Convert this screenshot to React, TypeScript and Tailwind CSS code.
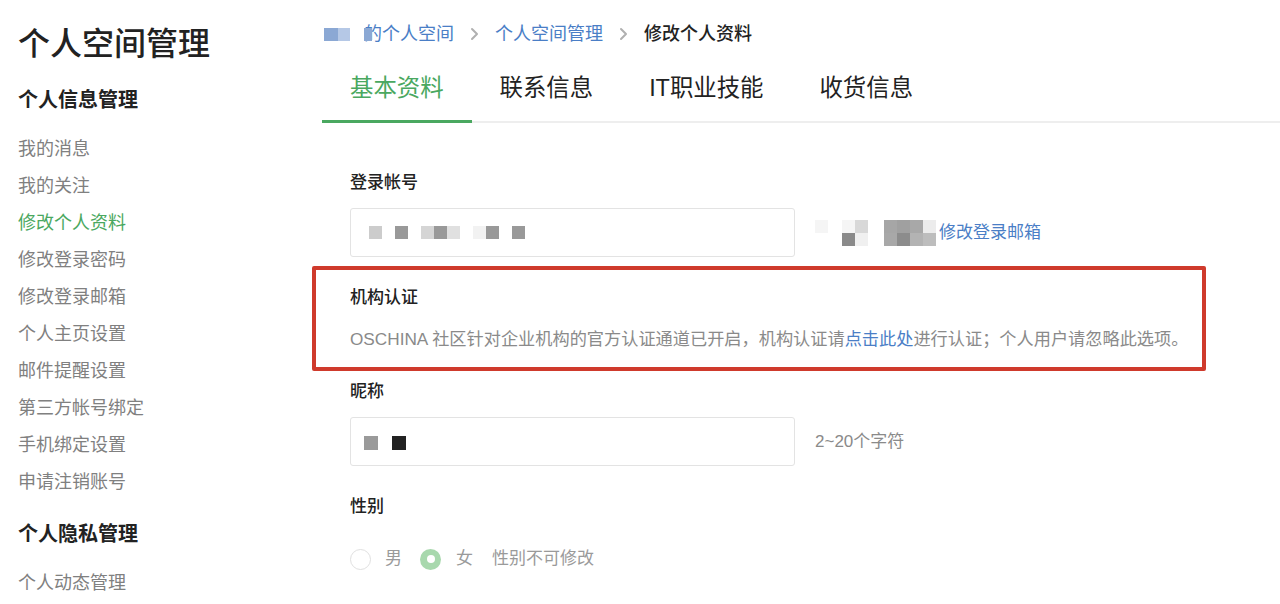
import React from 'react';

// 左侧菜单
const menuItems = [
  '我的消息',
  '我的关注',
  '修改个人资料',
  '修改登录密码',
  '修改登录邮箱',
  '个人主页设置',
  '邮件提醒设置',
  '第三方帐号绑定',
  '手机绑定设置',
  '申请注销账号',
];

const tabs = ['基本资料', '联系信息', 'IT职业技能', '收货信息'];

// 打码的像素块
const Pixels = ({ rows, size = 13 }: { rows: string[][]; size?: number }) => (
  <div className="flex flex-col">
    {rows.map((row, i) => (
      <div key={i} className="flex">
        {row.map((c, j) => (
          <span key={j} style={{ width: size, height: size, background: c }} />
        ))}
      </div>
    ))}
  </div>
);

const Chevron = () => (
  <svg width="9" height="14" viewBox="0 0 9 14" className="mx-[16px]">
    <path d="M2 2l5 5-5 5" fill="none" stroke="#b0b0b0" strokeWidth="2" strokeLinecap="round" strokeLinejoin="round" />
  </svg>
);

const App = () => {
  return (
    <div
      className="flex w-[1280px] h-[604px] overflow-hidden bg-white text-[#333]"
      style={{ fontFamily: '"Liberation Sans", "Noto Sans CJK SC", sans-serif' }}
    >
      {/* 侧边栏 */}
      <aside className="w-[322px] shrink-0 pl-[18px] pt-[24px]">
        <h1 className="text-[32px] leading-[40px] font-medium text-[#222]">个人空间管理</h1>
        <h2 className="mt-[22px] text-[20px] leading-[28px] font-bold text-[#222]">个人信息管理</h2>
        <ul className="mt-[17px]">
          {menuItems.map((item) => (
            <li
              key={item}
              className={`text-[18px] leading-[37px] ${item === '修改个人资料' ? 'text-[#4aa860]' : 'text-[#808080]'}`}
            >
              {item}
            </li>
          ))}
        </ul>
        <h2 className="mt-[19px] text-[20px] leading-[28px] font-bold text-[#222]">个人隐私管理</h2>
        <div className="mt-[17px] text-[18px] leading-[37px] text-[#808080]">个人动态管理</div>
      </aside>

      {/* 主内容 */}
      <main className="flex-1 pt-[22px]">
        <nav className="flex items-center pl-[2px] text-[18px] leading-[24px]">
          <span className="w-[14px] h-[13px] bg-[#8ba8d4]" />
          <span className="w-[12px] h-[13px] bg-[#b5c8e6]" />
          <span className="relative ml-[14px] text-[#4a7ec6]">
            <span className="absolute left-0 top-[6px] w-[8px] h-[13px] bg-[#8ba8d4]" />
            的个人空间
          </span>
          <Chevron />
          <span className="text-[#4a7ec6]">个人空间管理</span>
          <Chevron />
          <span className="font-medium text-[#222]">修改个人资料</span>
        </nav>

        <div className="mt-[26px] flex border-b-2 border-[#eeeeee]">
          {tabs.map((t, i) => (
            <div
              key={t}
              className={`px-7 pb-4 text-[23.4px] leading-[32px] ${
                i === 0 ? 'text-[#4aa860] border-b-[3px] border-[#4aa860] -mb-[2px]' : 'text-[#222] pb-[17px]'
              }`}
            >
              {t}
            </div>
          ))}
        </div>

        <div className="pl-[28px] pt-[48px]">
          {/* 登录帐号 */}
          <label className="block text-[17px] leading-[24px] font-medium text-[#222]">登录帐号</label>
          <div className="mt-[13px] flex items-center">
            <div className="w-[445px] h-[49px] border border-[#e3e3e3] rounded-[3px] flex items-center pl-[18px]">
              <Pixels
                rows={[[
                  '#cccccc', '#fff', '#999999', '#fff', '#d5d5d5', '#999999', '#e0e0e0', '#fff', '#f2f2f2', '#999999', '#fff', '#999999',
                ]]}
              />
            </div>
            <div className="ml-[20px] flex items-center">
              <Pixels rows={[['#f5f5f5'], ['#fff']]} />
              <div className="ml-[14px]">
                <Pixels rows={[['#f5f5f5', '#d8d8d8'], ['#8a8a8a', '#f0f0f0']]} />
              </div>
              <div className="ml-[16px]">
                <Pixels
                  rows={[
                    ['#a6a6a6', '#a0a0a0', '#a8a8a8', '#ececec'],
                    ['#a8a8a8', '#8c8c8c', '#b3b3b3', '#bdbdbd'],
                  ]}
                />
              </div>
              <a className="ml-[3px] text-[17px] leading-[24px] text-[#4a7ec6]">修改登录邮箱</a>
            </div>
          </div>

          {/* 机构认证 */}
          <div className="mt-[9px] -ml-[38px] w-[894px] border-4 border-[#cf3a2c] rounded-[2px] pl-[34px] pt-[16px] pb-[16px]">
            <div className="text-[17px] leading-[24px] font-medium text-[#222]">机构认证</div>
            <p className="mt-[17px] text-[17.2px] leading-[24px] text-[#8a8a8a]">
              OSCHINA 社区针对企业机构的官方认证通道已开启，机构认证请
              <a className="text-[#4a7ec6]">点击此处</a>
              进行认证；个人用户请忽略此选项。
            </p>
          </div>

          {/* 昵称 */}
          <label className="mt-[9px] block text-[17px] leading-[24px] font-medium text-[#222]">昵称</label>
          <div className="mt-[13px] flex items-center">
            <div className="w-[445px] h-[49px] border border-[#e3e3e3] rounded-[3px] flex items-center pl-[13px] pt-[2px]">
              <Pixels rows={[['#9a9a9a', '#fff', '#222222']]} size={14} />
            </div>
            <span className="ml-[20px] pt-[1px] text-[17px] leading-[24px] text-[#8a8a8a]">2~20个字符</span>
          </div>

          {/* 性别 */}
          <label className="mt-[29px] block text-[17px] leading-[24px] font-medium text-[#222]">性别</label>
          <div className="mt-[28px] flex items-center text-[17px] leading-[24px] text-[#9a9a9a]">
            <span className="w-[21px] h-[21px] rounded-full border border-[#e0e0e0]" />
            <span className="ml-[14px]">男</span>
            <span className="ml-[18px] w-[21px] h-[21px] rounded-full bg-[#a8d8ad] flex items-center justify-center">
              <span className="w-[8px] h-[8px] rounded-full bg-white" />
            </span>
            <span className="ml-[15px]">女</span>
            <span className="ml-[19px]">性别不可修改</span>
          </div>
        </div>
      </main>
    </div>
  );
};

export default App;
